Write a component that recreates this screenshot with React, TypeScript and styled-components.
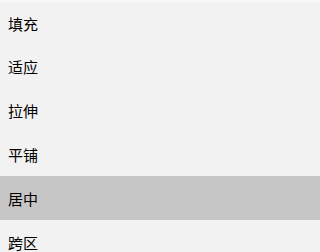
import React from 'react'
import styled, { createGlobalStyle } from 'styled-components'

const options = ['填充', '适应', '拉伸', '平铺', '居中', '跨区']
const selected = '居中'

const App: React.FC = () => {
  return (
    <>
      <GlobalStyle />
      <StyledMenu>
        {options.map((label) => (
          <StyledItem key={label} $active={label === selected}>
            {label}
          </StyledItem>
        ))}
      </StyledMenu>
    </>
  )
}

const GlobalStyle = createGlobalStyle`
  html, body {
    margin: 0;
    padding: 0;
    background: #f2f2f2;
    overflow: hidden;
  }
`

const StyledMenu = styled.div`
  display: flex;
  flex-direction: column;
  width: 100%;
  height: 252px;
  background: #f2f2f2;
  border-top: 2px solid #f7f7f7;
  box-sizing: border-box;
  overflow: hidden;
`

const StyledItem = styled.div<{ $active: boolean }>`
  display: flex;
  align-items: center;
  flex: 0 0 44px;
  padding-left: 8px;
  background-color: ${(props) => (props.$active ? '#c6c6c6' : 'transparent')};
  color: #000;
  font-family: 'Noto Sans CJK SC', 'Liberation Sans', sans-serif;
  font-size: 15px;
  &:first-child {
    flex-basis: 42px;
  }
`

export default App
